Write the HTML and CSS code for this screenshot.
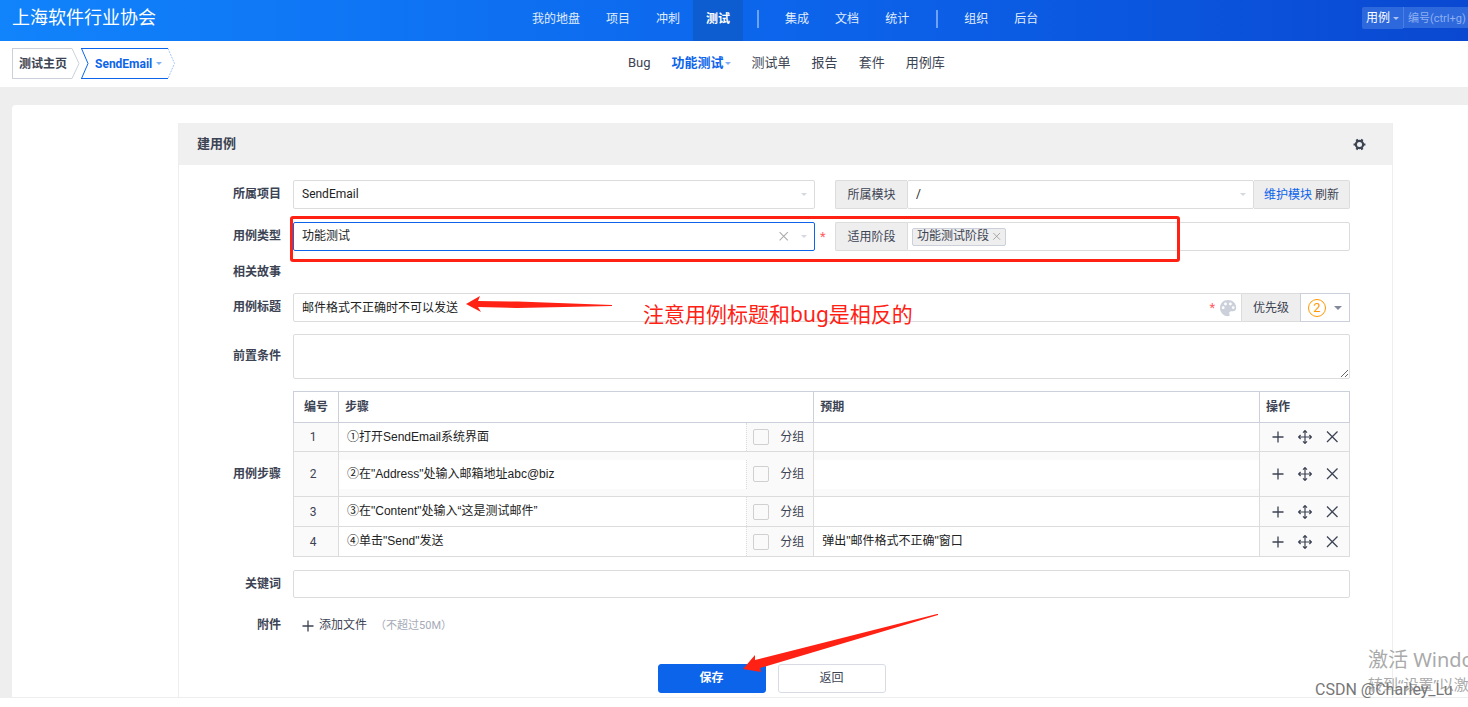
FILE: index.html
```html
<!DOCTYPE html>
<html lang="zh-CN">
<head>
<meta charset="utf-8">
<title>建用例</title>
<link rel="stylesheet" href="styles.css">
</head>
<body>
<svg class="sprite" aria-hidden="true">
  <symbol id="plus" viewBox="0 0 14 14"><path stroke-width="1.300" d="M7 1.500v11M1.500 7h11"/></symbol>
  <symbol id="move" viewBox="0 0 14 14"><path stroke-width="1.200" d="M7 1v12M1 7h12M5 2.600l2-2 2 2M5 11.400l2 2 2-2M2.600 5l-2 2 2 2M11.400 5l2 2-2 2"/></symbol>
  <symbol id="close" viewBox="0 0 14 14"><path stroke-width="1.300" d="M2 1.500l10.500 10.500M12.500 1.500L2 12"/></symbol>
</svg>

<header class="topbar">
  <a class="brand" href="#">上海软件行业协会</a>
  <nav class="mainnav">
    <a href="#">我的地盘</a><a href="#">项目</a><a href="#">冲刺</a><a class="active" href="#">测试</a>
    <span class="divider"></span>
    <a href="#">集成</a><a href="#">文档</a><a href="#">统计</a>
    <span class="divider"></span>
    <a href="#">组织</a><a href="#">后台</a>
  </nav>
  <form class="search">
    <button type="button" class="search-type">用例<span class="caret"></span></button>
    <input class="search-input" type="text" placeholder="编号(ctrl+g)" aria-label="编号">
  </form>
</header>

<div class="subbar">
  <div class="crumbs">
    <a class="crumb" href="#"><span class="crumb-body">测试主页</span><svg class="crumb-edge" viewBox="0 0 8 31"><path d="M0 .5L7 15.500 0 30.500"/></svg></a>
    <a class="crumb current" href="#"><svg class="crumb-edge" viewBox="0 0 8 31"><path d="M0 .5h8M.5.5l6.500 15L.5 30.500M0 30.500h8"/></svg><span class="crumb-body">SendEmail<span class="caret"></span></span><svg class="crumb-edge dashed" viewBox="0 0 8 31"><path d="M0 .5L6.500 15.500 0 30.500"/></svg></a>
  </div>
  <nav class="subnav">
    <a href="#">Bug</a><a class="active" href="#">功能测试<span class="caret"></span></a><a href="#">测试单</a><a href="#">报告</a><a href="#">套件</a><a href="#">用例库</a>
  </nav>
</div>

<main class="main">
  <div class="card">
    <section class="panel">
      <div class="panel-head">
        <h1>建用例</h1>
        <button type="button" class="icon-btn" aria-label="设置"><svg class="gear" viewBox="0 0 14 14"><circle cx="7" cy="7" r="3.900"/><path d="M13.400 7h-2.500M.6 7h2.500M10.200 1.500L9 3.500M3.800 12.500L5 10.500M3.800 1.500L5 3.500M10.200 12.500L9 10.500"/></svg></button>
      </div>
      <form class="form">
        <div class="row">
          <label for="product">所属项目</label>
          <div class="pair">
            <div class="select"><select id="product"><option>SendEmail</option></select></div>
            <span></span>
            <div class="group">
              <label class="addon" for="module">所属模块</label>
              <div class="select"><select id="module"><option>/</option></select></div>
              <span class="addon end"><a class="link" href="#">维护模块</a> <a href="#">刷新</a></span>
            </div>
          </div>
        </div>
        <div class="row">
          <label for="type">用例类型</label>
          <div class="pair">
            <div class="select focus"><select id="type"><option>功能测试</option></select><button type="button" class="clear" aria-label="清除"><svg viewBox="0 0 14 14"><use href="#close"/></svg></button></div>
            <span class="required">*</span>
            <div class="group">
              <label class="addon" for="stage">适用阶段</label>
              <div class="tags"><span class="tag">功能测试阶段<svg viewBox="0 0 14 14"><use href="#close"/></svg></span><input id="stage" type="text"></div>
            </div>
          </div>
        </div>
        <div class="row story"><span class="label">相关故事</span></div>
        <div class="row">
          <label for="title">用例标题</label>
          <div class="group">
            <div class="title-box">
              <input id="title" type="text" value="邮件格式不正确时不可以发送">
              <span class="required">*</span>
              <button type="button" class="icon-btn" aria-label="颜色"><svg class="palette" viewBox="0 0 18 18"><path fill-rule="evenodd" d="M9 1C4.300 1 1 4.500 1 9s3.600 8.300 8 8.300c1.500 0 2-1 1.500-2-.8-1.600.1-3 1.800-3H14c2 0 3.200-1.400 3.200-3.500C17.200 4.300 13.600 1 9 1zM4.200 7.300a1.400 1.400 0 100 2.800 1.400 1.400 0 000-2.800zM6.500 3.600a1.400 1.400 0 100 2.800 1.400 1.400 0 000-2.800zM11.400 3.600a1.400 1.400 0 100 2.800 1.400 1.400 0 000-2.800zM14.200 7.200a1.400 1.400 0 100 2.800 1.400 1.400 0 000-2.800z"/></svg></button>
            </div>
            <span class="addon short">优先级</span>
            <button type="button" class="pri"><span class="pri-num">2</span><span class="caret"></span></button>
          </div>
        </div>
        <div class="row">
          <label for="pre">前置条件</label>
          <textarea id="pre"></textarea>
        </div>
        <div class="row">
          <span class="label">用例步骤</span>
          <table class="steps">
            <thead><tr><th class="c-num">编号</th><th class="c-step">步骤</th><th class="c-exp">预期</th><th class="c-act">操作</th></tr></thead>
            <tbody>
              <tr class="short-row">
                <td class="num">1</td>
                <td><div class="step"><input type="text" value="①打开SendEmail系统界面" aria-label="步骤1"><label class="grp"><input type="checkbox">分组</label></div></td>
                <td><input type="text" aria-label="预期1"></td>
                <td><div class="acts"><button type="button" aria-label="添加"><svg viewBox="0 0 14 14"><use href="#plus"/></svg></button><button type="button" aria-label="移动"><svg viewBox="0 0 14 14"><use href="#move"/></svg></button><button type="button" aria-label="删除"><svg viewBox="0 0 14 14"><use href="#close"/></svg></button></div></td>
              </tr>
              <tr class="tall">
                <td class="num">2</td>
                <td><div class="step"><input type="text" value="②在&quot;Address&quot;处输入邮箱地址abc@biz" aria-label="步骤2"><label class="grp"><input type="checkbox">分组</label></div></td>
                <td><input type="text" aria-label="预期2"></td>
                <td><div class="acts"><button type="button" aria-label="添加"><svg viewBox="0 0 14 14"><use href="#plus"/></svg></button><button type="button" aria-label="移动"><svg viewBox="0 0 14 14"><use href="#move"/></svg></button><button type="button" aria-label="删除"><svg viewBox="0 0 14 14"><use href="#close"/></svg></button></div></td>
              </tr>
              <tr>
                <td class="num">3</td>
                <td><div class="step"><input type="text" value="③在&quot;Content&quot;处输入“这是测试邮件”" aria-label="步骤3"><label class="grp"><input type="checkbox">分组</label></div></td>
                <td><input type="text" aria-label="预期3"></td>
                <td><div class="acts"><button type="button" aria-label="添加"><svg viewBox="0 0 14 14"><use href="#plus"/></svg></button><button type="button" aria-label="移动"><svg viewBox="0 0 14 14"><use href="#move"/></svg></button><button type="button" aria-label="删除"><svg viewBox="0 0 14 14"><use href="#close"/></svg></button></div></td>
              </tr>
              <tr>
                <td class="num">4</td>
                <td><div class="step"><input type="text" value="④单击&quot;Send&quot;发送" aria-label="步骤4"><label class="grp"><input type="checkbox">分组</label></div></td>
                <td><input type="text" value="弹出&quot;邮件格式不正确&quot;窗口" aria-label="预期4"></td>
                <td><div class="acts"><button type="button" aria-label="添加"><svg viewBox="0 0 14 14"><use href="#plus"/></svg></button><button type="button" aria-label="移动"><svg viewBox="0 0 14 14"><use href="#move"/></svg></button><button type="button" aria-label="删除"><svg viewBox="0 0 14 14"><use href="#close"/></svg></button></div></td>
              </tr>
            </tbody>
          </table>
        </div>
        <div class="row">
          <label for="keywords">关键词</label>
          <input id="keywords" class="control" type="text">
        </div>
        <div class="row">
          <span class="label">附件</span>
          <div class="files"><button type="button" class="add-file"><svg viewBox="0 0 14 14"><use href="#plus"/></svg>添加文件</button><span class="hint">（不超过50M）</span></div>
        </div>
        <div class="actions">
          <button type="submit" class="btn primary">保存</button>
          <button type="button" class="btn">返回</button>
        </div>
      </form>
    </section>
  </div>
</main>
<footer class="footer"></footer>

<div class="notes">
  <div class="note-box"></div>
  <svg class="note-arrow first" viewBox="0 0 148 18"><path d="M1 9L15 1l-2 5 40 .5L147 10v1L52 13l-39-1 3 5z"/></svg>
  <p class="note-text">注意用例标题和bug是相反的</p>
  <svg class="note-arrow second" viewBox="0 0 198 60"><path d="M1 57L13 43v5L195 2h1v1L18 56l1 4z"/></svg>
  <div class="activate"><p class="activate-title">激活 Windows</p><p class="activate-sub">转到“设置”以激活 Windows。</p></div>
  <p class="credit">CSDN @Charley_Lu</p>
</div>
</body>
</html>
```
FILE: styles.css
```css
* { box-sizing: border-box; }
body {
  margin: 0;
  height: 100vh;
  display: flex;
  flex-direction: column;
  overflow: hidden;
  position: relative;
  background: #eee;
  color: #3c4353;
  font: 12px/20px Roboto, "Noto Sans CJK SC", sans-serif;
}
a { color: inherit; text-decoration: none; }
button, input, select, textarea { font: inherit; color: inherit; margin: 0; }
button { background: none; border: 0; padding: 0; }
input, textarea, select { outline: 0; }
p, h1 { margin: 0; }
.sprite { position: absolute; width: 0; height: 0; }
svg { flex: none; fill: none; stroke: currentColor; }
.caret {
  display: inline-block;
  border: 3px solid transparent;
  border-top-color: currentColor;
  border-bottom: 0;
  vertical-align: middle;
}

.topbar {
  flex: none;
  display: grid;
  grid-template-columns: 518fr auto 416fr;
  height: 41px;
  background: linear-gradient(90deg, #1183fb, #0c64eb 55%, #0a48d1);
  color: #fff;
}
.brand { padding-left: 12px; font-size: 18px; line-height: 36px; white-space: nowrap; }
.mainnav { display: flex; line-height: 38px; color: #e1edfd; }
.mainnav a { padding: 0 13px; white-space: nowrap; }
.mainnav .active { background: #0d5cd0; color: #fff; font-weight: 700; }
.divider { width: 2px; height: 18px; margin: 10px 13px 0 14px; background: #6da3f4; }
.search { display: flex; justify-content: flex-end; padding-top: 7px; }
.search-type {
  height: 22px;
  width: 41px;
  display: flex;
  align-items: center;
  justify-content: space-between;
  padding: 0 4px;
  background: #2d69dd;
  border-radius: 2px 0 0 2px;
  white-space: nowrap;
}
.search-type .caret { color: #a9c3f3; }
.search-input {
  width: 65px;
  height: 21px;
  padding: 2px 0 0 4px;
  border: 0;
  border-left: 1px solid #4a7fe4;
  background: #2d69dd;
  font-size: 11px;
}
.search-input::placeholder { color: #8eaff0; }

.subbar {
  flex: none;
  display: grid;
  grid-template-columns: 628fr 840fr;
  height: 46px;
  background: #fff;
}
.crumbs { display: flex; gap: 1px; padding: 7px 0 0 12px; }
.crumb { display: flex; height: 31px; font-weight: 700; color: #3c4353; }
.crumb-body {
  display: flex;
  align-items: center;
  gap: 4px;
  padding: 0 5px 0 6px;
  border: 1px solid #cbd0db;
  border-right: 0;
  white-space: nowrap;
}
.crumb-edge { width: 8px; height: 31px; color: #cbd0db; }
.current { color: #0c64eb; }
.current .crumb-body { border-color: #0c64eb; border-left: 0; padding: 0 6px; }
.current .crumb-edge { color: #0c64eb; }
.current .dashed { color: #a5c6f8; stroke-dasharray: 2 1; }
.current .caret, .subnav .caret { color: #7fb0f6; }
.subnav { display: flex; gap: 21px; font-size: 13px; line-height: 43px; white-space: nowrap; }
.subnav .active { color: #0c64eb; font-weight: 700; }
.subnav .caret { margin-left: 1px; }

.main { flex: 1; min-height: 0; display: flex; padding: 18px 0 0 12px; overflow: hidden; }
.card {
  flex: 1;
  min-width: 0;
  padding: 18px 75px 0 166px;
  background: #fff;
  border-radius: 4px 0 0 0;
}
.panel { min-height: 100%; border: 1px solid #eee; border-width: 0 1px; }
.panel-head {
  display: flex;
  align-items: center;
  justify-content: space-between;
  height: 42px;
  padding: 0 26px 0 18px;
  background: #f0f0f0;
}
.panel-head h1 { font-size: 13px; }
.icon-btn { display: flex; align-items: center; }
.gear { width: 13px; height: 13px; stroke-width: 2.4; }

.form { display: flex; flex-direction: column; gap: 12px; padding: 15px 42px 0 0; }
.row {
  display: grid;
  grid-template-columns: 102px minmax(0, 1fr);
  column-gap: 12px;
  align-items: center;
  min-height: 30px;
}
.row > label, .label { font-weight: 700; text-align: right; }
.row > * { align-self: start; line-height: 29px; }
.row.story { min-height: 17px; }
.row.story .label { line-height: 17px; }
.row:has(.title-box) { min-height: 29px; }
.row:has(textarea) > label { align-self: center; }
.row:has(.steps) > .label { align-self: center; }
.row:has(.control) { min-height: 29px; }
.row:has(.files) { min-height: 29px; }
.pair { display: grid; grid-template-columns: minmax(0, 522fr) 20px minmax(0, 515fr); }
.required { color: #ff5d5d; font-size: 13px; line-height: 29px; padding-left: 5px; }
.select { position: relative; flex: 1; min-width: 0; }
.select select {
  display: block;
  width: 100%;
  height: 29px;
  padding: 0 8px;
  border: 1px solid #dcdcdc;
  border-radius: 2px;
  background: #fff;
  color: #222;
  line-height: 27px;
  appearance: none;
}
.select::after {
  content: "";
  position: absolute;
  right: 8px;
  top: 13px;
  border: 3px solid transparent;
  border-top-color: #d5d8e0;
  border-bottom: 0;
}
.select.focus select { border-color: #0c64eb; }
.clear { position: absolute; right: 26px; top: 9px; height: 11px; display: flex; color: #aaa; }
.clear svg { width: 11px; height: 11px; }
.group { display: flex; height: 29px; }
.addon {
  flex: none;
  width: 72px;
  border: 1px solid #dcdcdc;
  border-right: 0;
  border-radius: 2px 0 0 2px;
  background: #eee;
  text-align: center;
  line-height: 28px;
  white-space: nowrap;
}
.addon.end { width: 96px; border-left: 0; border-right: 1px solid #dcdcdc; border-radius: 0 2px 2px 0; }
.addon.short { width: 58px; border-left: 0; border-radius: 0; }
.link { color: #0c64eb; }
.tags {
  flex: 1;
  min-width: 0;
  display: flex;
  align-items: center;
  padding: 0 4px;
  border: 1px solid #dcdcdc;
  border-radius: 0 2px 2px 0;
}
.tags input { flex: 1; min-width: 0; height: 20px; border: 0; }
.tag {
  display: flex;
  align-items: center;
  gap: 3px;
  height: 18px;
  padding: 0 4px;
  border: 1px solid #cbd0db;
  border-radius: 2px;
  background: #eee;
  color: #3c4353;
  white-space: nowrap;
}
.tag svg { width: 9px; height: 9px; color: #999; }
.title-box {
  flex: 1;
  display: flex;
  align-items: center;
  gap: 4px;
  padding: 0 4px 0 8px;
  border: 1px solid #dcdcdc;
  border-radius: 2px 0 0 2px;
}
.title-box input {
  flex: 1;
  min-width: 0;
  padding: 0;
  border: 0;
  background: transparent;
  color: #222;
  line-height: 20px;
}
.title-box .required { padding: 0; }
.palette { width: 18px; height: 18px; fill: #cbd0db; stroke: none; }
.pri {
  display: flex;
  align-items: center;
  justify-content: space-between;
  width: 50px;
  padding: 0 7px;
  border: 1px solid #cbd0db;
  color: #838a9d;
}
.pri .caret { border-width: 4px 4px 0; }
.pri-num {
  width: 18px;
  height: 18px;
  border: 1px solid #ff9800;
  border-radius: 50%;
  color: #ff9800;
  font-size: 13px;
  line-height: 16px;
}
textarea, .control {
  display: block;
  width: 100%;
  border: 1px solid #dcdcdc;
  border-radius: 2px;
  background: #fff;
}
textarea { height: 45px; resize: vertical; }
.row:has(textarea) { min-height: 45px; }
.control { height: 28px; }

.steps { width: 100%; table-layout: fixed; border-collapse: collapse; margin-bottom: 1px; line-height: 20px; }
.steps th, .steps td { padding: 0; border: 1px solid #dcdcdc; text-align: left; }
.steps th { height: 31px; padding: 0 6px; border-color: #cbd0db; }
.steps td { height: 30px; background: #fafafa; }
.c-num { width: 45px; }
.steps .c-num { text-align: center; }
.steps td.num { text-align: center; padding-right: 6px; }
.c-step { width: 45%; }
.c-act { width: 90px; }
.steps input[type="text"] {
  display: block;
  width: 100%;
  min-width: 0;
  height: 29px;
  padding: 0 8px 4px;
  border: 0;
  background: #fff;
  color: #222;
  font-family: "Liberation Sans", "Noto Sans CJK SC", sans-serif;
}
.steps .short-row td { height: 29px; }
.steps .short-row input[type="text"] { height: 28px; }
.steps .tall td { height: 45px; }
.step { display: flex; }
.grp {
  flex: none;
  display: flex;
  align-items: center;
  gap: 11px;
  width: 67px;
  padding-left: 6px;
  border-left: 1px dotted #dcdcdc;
  white-space: nowrap;
}
.grp input { appearance: none; width: 16px; height: 16px; border: 1px solid #d0d0d0; border-radius: 2px; }
.acts { display: flex; padding-left: 4px; }
.acts button { display: flex; justify-content: center; width: 27px; }
.acts svg { width: 14px; height: 14px; }
.files { display: flex; align-items: center; height: 29px; padding-left: 8px; }
.add-file { display: flex; align-items: center; gap: 4px; }
.add-file svg { width: 14px; height: 14px; }
.hint { padding-left: 8px; color: #a6aab8; font-size: 11px; }
.actions { display: flex; justify-content: center; gap: 12px; padding: 12px 0 0 14px; }
.btn { width: 108px; height: 29px; border: 1px solid #d8dbe3; border-radius: 3px; background: #fff; line-height: 27px; }
.btn.primary { border-color: #0c64eb; background: #0c64eb; color: #fff; font-weight: 700; }
.footer { flex: none; height: 10px; border-top: 1px solid #eee; background: #fff; }

/* Annotation layer drawn over the page */
.notes { position: absolute; inset: 0; overflow: hidden; pointer-events: none; }
.notes > * { position: absolute; white-space: nowrap; }
.note-box { left: 290px; top: 216px; width: 890px; height: 46px; border: 3px solid #ff2114; border-radius: 3px; }
.note-arrow { fill: #ff2114; stroke: none; }
.first { left: 465px; top: 295px; width: 148px; height: 18px; }
.second { left: 742px; top: 612px; width: 198px; height: 60px; }
.note-text { left: 643px; top: 299px; color: #ff2114; font: 21px/30px "Noto Sans", "Noto Sans CJK SC", sans-serif; }
.activate { left: 1368px; top: 646px; color: #aaa; font-family: "Noto Sans", "Noto Sans CJK SC", sans-serif; }
.activate-title { font-size: 20px; line-height: 28px; }
.activate-sub { font-size: 15px; line-height: 20px; }
.credit { left: 1315px; top: 680px; color: #777; font-size: 16px; }
```
